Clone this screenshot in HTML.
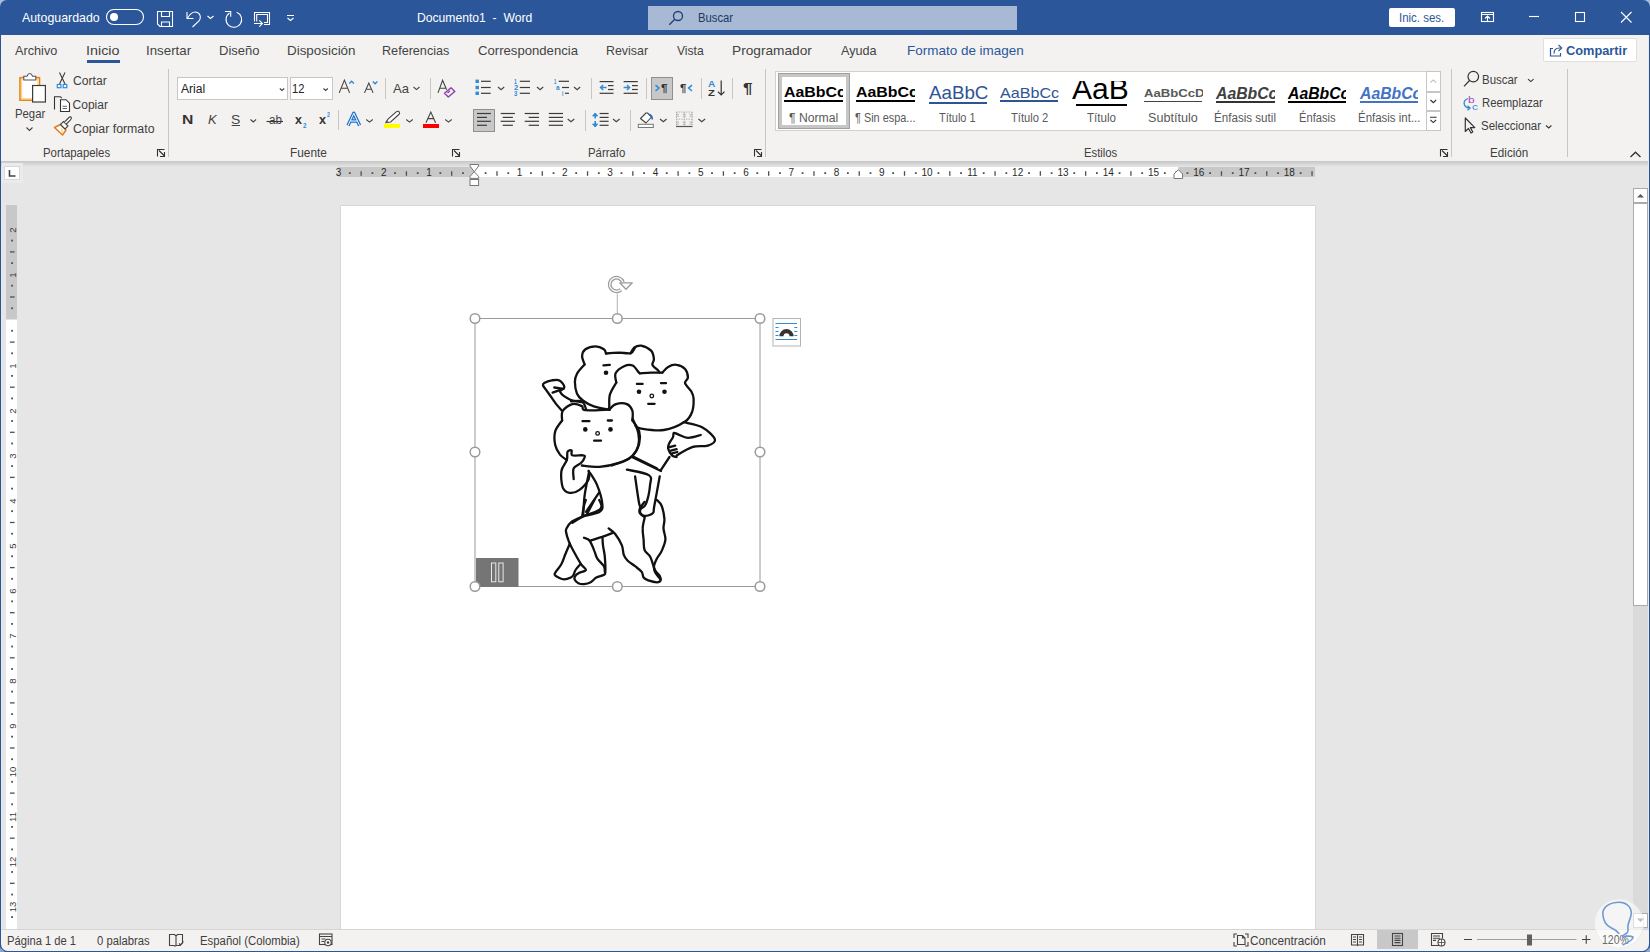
<!DOCTYPE html>
<html><head><meta charset="utf-8"><style>
html,body{margin:0;padding:0;width:1650px;height:952px;overflow:hidden;background:#e6e6e6;position:relative}
.t{position:absolute;line-height:1;white-space:nowrap;transform-origin:0 0;font-family:"Liberation Sans",sans-serif}
svg{position:absolute;overflow:visible}
</style></head><body>
<div style='position:absolute;left:0px;top:0px;width:1650px;height:35px;background:#2b579a'></div>
<div style='position:absolute;left:0px;top:35px;width:1650px;height:126px;background:#f3f2f1'></div>
<div style='position:absolute;left:0px;top:161px;width:1650px;height:6px;background:linear-gradient(#c6c6c6,#e6e6e6)'></div>
<div style='position:absolute;left:0px;top:929px;width:1650px;height:23px;background:#f3f2f1;border-top:1px solid #d4d4d4;box-sizing:border-box'></div>
<div style='position:absolute;left:1648px;top:35px;width:1px;height:894px;background:#e8e8e8'></div>
<div style='position:absolute;left:648px;top:6px;width:369px;height:24px;background:#a7b9d4'></div>
<div style='position:absolute;left:1389px;top:8px;width:66px;height:19px;background:#fff;border-radius:2px'></div>
<div style='position:absolute;left:87px;top:60px;width:33px;height:3px;background:#2b579a'></div>
<div style='position:absolute;left:1543px;top:38px;width:94px;height:24px;background:#fff;border:1px solid #e1dfdd;border-radius:2px;box-sizing:border-box'></div>
<div style='position:absolute;left:168px;top:69px;width:1px;height:88px;background:#c8c6c4'></div>
<div style='position:absolute;left:765px;top:69px;width:1px;height:88px;background:#c8c6c4'></div>
<div style='position:absolute;left:1451px;top:69px;width:1px;height:88px;background:#c8c6c4'></div>
<div style='position:absolute;left:1567px;top:69px;width:1px;height:88px;background:#c8c6c4'></div>
<div style='position:absolute;left:341px;top:206px;width:974px;height:723px;background:#fff'></div>
<svg style="left:0;top:0" width="1650" height="35" viewBox="0 0 1650 35">
<g fill="none" stroke="#fff" stroke-width="1.1">
<rect x="106.5" y="9.5" width="37" height="15" rx="7.5"/>
<path d="M157.5 11.5h15v15h-12.5l-2.5-2.5z"/>
<path d="M161.5 11.5v5h8v-5"/>
<path d="M161.5 26.5v-4.5h8v4.5"/>
<path d="M187 12v6.5h6.5"/>
<path d="M187.5 18c3-5 7-7 10-5.5c3.5 2 3.5 5.5 1.5 8.5l-6.5 6"/>
<path d="M207.5 16l3 2.5l3-2.5"/>
<path d="M236.7 12.2A7.8 7.8 0 1 1 229.5 13"/>
<path d="M225 11.5h5.7v5.2"/>
<path d="M254.5 21.5v-9h15v12h-5.5M256.7 21.5v-7h10.8v8h-3.5"/>
<path d="M254 23.5h8.5m-3.2-3.2l3.2 3.2l-3.2 3.2"/>
<path d="M287 15.5h7M287.5 18l3 2.5l3-2.5"/>
<rect x="1481.5" y="12.5" width="12" height="9"/>
<path d="M1481.5 14.5h12M1487.5 21.5v-5.5m-2.5 2.5l2.5-2.5l2.5 2.5"/>
<path d="M1529 16.5h10"/>
<rect x="1575.5" y="12.5" width="9" height="9"/>
<path d="M1621 12l10.5 10.5M1631.5 12l-10.5 10.5"/>
</g>
<circle cx="114" cy="17" r="4" fill="#fff"/>
<g fill="none" stroke="#1f3f73" stroke-width="1.3"><circle cx="678" cy="16" r="4.5"/><path d="M674.8 19.2l-5.5 5.5"/></g>
</svg>
<svg style="left:0;top:60px" width="170" height="100" viewBox="0 60 170 100">
<rect x="20" y="77.7" width="19.5" height="22.5" fill="#fff" stroke="#e8830f" stroke-width="1.6"/>
<rect x="21.5" y="79.2" width="16.5" height="19.5" fill="none" stroke="#fbd38b" stroke-width="1.2"/>
<path d="M23.8 80v-3.7h3.2c0.8-2 1.7-2.8 2.8-2.8s2 0.8 2.8 2.8h3.2v3.7z" fill="#fff" stroke="#555" stroke-width="1.1"/>
<rect x="32.6" y="85.5" width="12.8" height="16.5" fill="#fff" stroke="#3b3b3b" stroke-width="1.2"/>
<path d="M26.5 127.5l3 3l3-3" fill="none" stroke="#444" stroke-width="1.1"/>
<path d="M59.5 72.5l5.5 11.5M65 72.5l-5.5 11.5" stroke="#3b3b3b" stroke-width="1.1" fill="none"/>
<rect x="57.3" y="84.5" width="3.6" height="3.2" fill="#fff" stroke="#2f8ad8" stroke-width="1.2"/>
<rect x="63.2" y="84.5" width="3.6" height="3.2" fill="#fff" stroke="#2f8ad8" stroke-width="1.2"/>
<path d="M54.5 109.5v-12.8h5.8l1.5 1.5" fill="none" stroke="#333" stroke-width="1.1"/>
<path d="M60.5 111.5v-11.8h5.5l3.5 3.5v8.3z" fill="#fff" stroke="#333" stroke-width="1.1"/>
<path d="M62.5 106.3h4.5M62.5 108.5h4.5" stroke="#555" stroke-width="0.9"/>
<path d="M54.5 127.5l6-3l5.5 5.5l-3.5 5z" fill="#fff" stroke="#e07b17" stroke-width="1.5" stroke-linejoin="round"/>
<path d="M61 127l2.5 4l-2 2.5z" fill="#fbd38b"/>
<path d="M60.5 124.5l3-3l4.5 4.5l-3 3z" fill="#fff" stroke="#444" stroke-width="1.1"/>
<path d="M64.5 122l4.5-4.5c0.8-0.8 2-0.8 2.3 0s0 1.5-0.8 2.3l-4.2 4.2" fill="#fff" stroke="#444" stroke-width="1.1"/>
<path d="M157.5 156.5v-7h7M159 150.5l5.5 5.5M164.5 152v4.5h-4.5" fill="none" stroke="#333" stroke-width="1.1"/>
</svg>
<div style='position:absolute;left:177px;top:77px;width:111px;height:23px;background:#fff;border:1px solid #c8c6c4;box-sizing:border-box'></div>
<div style='position:absolute;left:290px;top:77px;width:43px;height:23px;background:#fff;border:1px solid #c8c6c4;box-sizing:border-box'></div>
<svg style="left:260px;top:115px;z-index:6" width="30" height="12" viewBox="260 115 30 12"><path d="M266.5 121.5h16.5" stroke="#3a3a3a" stroke-width="1.1"/></svg>
<svg style="left:170px;top:70px" width="300" height="70" viewBox="170 70 300 70">
<g fill="none" stroke="#444" stroke-width="1.1">
<path d="M279.8 88.5l2.2 2l2.2-2M323.5 88.5l2.2 2l2.2-2"/>
<path d="M339.2 92.9l5.2-12.8l5.2 12.8M341.2 88.3h6.4"/>
<path d="M364.5 92.9l4.3-9.8l4.3 9.8M366.2 89.3h5.2"/>
<path d="M413.5 87l3 2.6l3-2.6"/>
<path d="M438 92.9l4.6-12.6l4 9.5M439.8 88.3h5.5"/>
<path d="M250.5 119.5l2.8 2.5l2.8-2.5M366.3 119.5l3.2 2.6l3.2-2.6M406.3 119.5l3.2 2.6l3.2-2.6M445.3 119.5l3.2 2.6l3.2-2.6"/>
<path d="M426 122.7l4.8-10.7l4.8 10.7M427.8 118.6h6"/>
</g>
<path d="M349.3 83.6l2.3-2.3l2.3 2.3M372.8 81.5l2.3 2.3l2.3-2.3" fill="none" stroke="#2f8ad8" stroke-width="1.4"/>
<path d="M444.5 93.2l6.5-5.5l3.8 3.8l-6.5 5.5z" fill="none" stroke="#8e44ad" stroke-width="1.5" stroke-linejoin="round"/>
<path d="M447.5 93l2.5-2.3" stroke="#8e44ad" stroke-width="1.3"/>
<path d="M231.7 125.5h8.3" stroke="#444" stroke-width="1"/>
<path d="M348 125.5l5.8-12.3l5.8 12.3M350.3 121h7" fill="none" stroke="#1e73c9" stroke-width="3.4" stroke-linejoin="round"/><path d="M348 125.5l5.8-12.3l5.8 12.3M350.3 121h7" fill="none" stroke="#fff" stroke-width="1" stroke-linejoin="round"/>
<path d="M386 122.5l2-3.5l8.5-7.3c1-0.8 2.3-0.6 2.8 0.3c0.5 0.8 0.3 1.8-0.5 2.5l-8.2 7.5z" fill="#fff" stroke="#444" stroke-width="1.1"/>
<path d="M385 122.7l3-0.5l-1-2.2z" fill="#555"/>
<rect x="384" y="124" width="16" height="4" fill="#ffff00"/>
<rect x="423" y="124" width="16" height="4" fill="#ff0000"/>
<path d="M452.5 156.5v-7h7M454 150.5l5.5 5.5M459.5 152v4.5h-4.5" fill="none" stroke="#333" stroke-width="1.1"/>
</svg>
<div style='position:absolute;left:385px;top:78px;width:1px;height:21px;background:#c8c6c4'></div>
<div style='position:absolute;left:430px;top:78px;width:1px;height:21px;background:#c8c6c4'></div>
<div style='position:absolute;left:338px;top:110px;width:1px;height:20px;background:#c8c6c4'></div>
<div style='position:absolute;left:651px;top:77px;width:22px;height:23px;background:#c8c8c8;border:1px solid #8f8f8f;box-sizing:border-box'></div>
<div style='position:absolute;left:473px;top:109px;width:22px;height:23px;background:#c8c8c8;border:1px solid #8f8f8f;box-sizing:border-box'></div>
<div style='position:absolute;left:591px;top:78px;width:1px;height:21px;background:#c8c6c4'></div>
<div style='position:absolute;left:646px;top:78px;width:1px;height:21px;background:#c8c6c4'></div>
<div style='position:absolute;left:701px;top:78px;width:1px;height:21px;background:#c8c6c4'></div>
<div style='position:absolute;left:732px;top:78px;width:1px;height:21px;background:#c8c6c4'></div>
<div style='position:absolute;left:585px;top:110px;width:1px;height:21px;background:#c8c6c4'></div>
<div style='position:absolute;left:630px;top:110px;width:1px;height:21px;background:#c8c6c4'></div>
<svg style="left:460px;top:70px" width="320" height="90" viewBox="460 70 320 90"><rect x="475.5" y="79.6" width="3.4" height="3.4" fill="#2f8ad8"/><path d="M481 81.3H490.7" stroke="#3b3b3b" stroke-width="1.2"/><path d="M519.8 81.3H530" stroke="#3b3b3b" stroke-width="1.2"/><rect x="475.5" y="85.8" width="3.4" height="3.4" fill="#2f8ad8"/><path d="M481 87.5H490.7" stroke="#3b3b3b" stroke-width="1.2"/><path d="M519.8 87.5H530" stroke="#3b3b3b" stroke-width="1.2"/><rect x="475.5" y="91.6" width="3.4" height="3.4" fill="#2f8ad8"/><path d="M481 93.3H490.7" stroke="#3b3b3b" stroke-width="1.2"/><path d="M519.8 93.3H530" stroke="#3b3b3b" stroke-width="1.2"/><path d="M558.7 81.3H569" stroke="#3b3b3b" stroke-width="1.2"/><path d="M562 87.5H569" stroke="#3b3b3b" stroke-width="1.2"/><path d="M565 93.3H569" stroke="#3b3b3b" stroke-width="1.2"/><path d="M599.6 81.6H613.5" stroke="#3b3b3b" stroke-width="1.2"/><path d="M623.6 81.6H637.8" stroke="#3b3b3b" stroke-width="1.2"/><path d="M599.6 93.3H613.5" stroke="#3b3b3b" stroke-width="1.2"/><path d="M623.6 93.3H637.8" stroke="#3b3b3b" stroke-width="1.2"/><path d="M608 85.6H613.5" stroke="#3b3b3b" stroke-width="1.2"/><path d="M632 85.6H637.8" stroke="#3b3b3b" stroke-width="1.2"/><path d="M608 89.5H613.5" stroke="#3b3b3b" stroke-width="1.2"/><path d="M632 89.5H637.8" stroke="#3b3b3b" stroke-width="1.2"/><path d="M606.5 87.5h-6m2.6-2.6l-2.6 2.6l2.6 2.6M623.6 87.5h6m-2.6-2.6l2.6 2.6l-2.6 2.6" fill="none" stroke="#2f8ad8" stroke-width="1.4"/><path d="M655.5 85.2l3.5 2.9l-3.5 2.9M692 85.2l-3.5 2.9l3.5 2.9" fill="none" stroke="#2f8ad8" stroke-width="1.5"/><path d="M498 87l3.1 2.6l3.1-2.6" fill="none" stroke="#444" stroke-width="1.2"/><path d="M537 87l3.1 2.6l3.1-2.6" fill="none" stroke="#444" stroke-width="1.2"/><path d="M574 87l3.1 2.6l3.1-2.6" fill="none" stroke="#444" stroke-width="1.2"/><path d="M567.7 119l3.3 2.7l3.3-2.7" fill="none" stroke="#444" stroke-width="1.2"/><path d="M613 119l3.3 2.7l3.3-2.7" fill="none" stroke="#444" stroke-width="1.2"/><path d="M660 119l3.3 2.7l3.3-2.7" fill="none" stroke="#444" stroke-width="1.2"/><path d="M698.5 119l3.3 2.7l3.3-2.7" fill="none" stroke="#444" stroke-width="1.2"/><path d="M477 113.5H490.9" stroke="#3b3b3b" stroke-width="1.2"/><path d="M500.7 113.5H514.9" stroke="#3b3b3b" stroke-width="1.2"/><path d="M524.7 113.5H539" stroke="#3b3b3b" stroke-width="1.2"/><path d="M548.8 113.5H563" stroke="#3b3b3b" stroke-width="1.2"/><path d="M599.6 113.5H608.6" stroke="#3b3b3b" stroke-width="1.2"/><path d="M477 117.4H487" stroke="#3b3b3b" stroke-width="1.2"/><path d="M502.7 117.4H512.9" stroke="#3b3b3b" stroke-width="1.2"/><path d="M528.7 117.4H539" stroke="#3b3b3b" stroke-width="1.2"/><path d="M548.8 117.4H563" stroke="#3b3b3b" stroke-width="1.2"/><path d="M599.6 117.4H608.6" stroke="#3b3b3b" stroke-width="1.2"/><path d="M477 121.3H490.9" stroke="#3b3b3b" stroke-width="1.2"/><path d="M500.7 121.3H514.9" stroke="#3b3b3b" stroke-width="1.2"/><path d="M524.7 121.3H539" stroke="#3b3b3b" stroke-width="1.2"/><path d="M548.8 121.3H563" stroke="#3b3b3b" stroke-width="1.2"/><path d="M599.6 121.3H608.6" stroke="#3b3b3b" stroke-width="1.2"/><path d="M477 125.3H487" stroke="#3b3b3b" stroke-width="1.2"/><path d="M502.7 125.3H512.9" stroke="#3b3b3b" stroke-width="1.2"/><path d="M528.7 125.3H539" stroke="#3b3b3b" stroke-width="1.2"/><path d="M548.8 125.3H563" stroke="#3b3b3b" stroke-width="1.2"/><path d="M599.6 125.3H608.6" stroke="#3b3b3b" stroke-width="1.2"/><path d="M595.2 113v5.6M595.2 121v5.9" stroke="#2f8ad8" stroke-width="1.6"/><path d="M592.5 116l2.7-3l2.7 3zM592.5 124l2.7 3l2.7-3z" fill="#2f8ad8" stroke="#2f8ad8" stroke-width="0.8"/><path d="M721.2 80.5v14.5m-3.3-3.3l3.3 3.3l3.3-3.3" fill="none" stroke="#333" stroke-width="1.2"/><path d="M640.5 118.5l5.5-5.5l1.5 0l4 4l-5.5 6z" fill="#fff" stroke="#444" stroke-width="1.1" stroke-linejoin="round"/><path d="M649.5 114.5c2 1 3 2.5 2.8 5" fill="none" stroke="#1e6fc4" stroke-width="1.5"/><rect x="638.3" y="124.3" width="15" height="3.2" fill="#fff" stroke="#777" stroke-width="1"/><g stroke="#999" stroke-width="0.8" stroke-dasharray="1.2 1.2" fill="none"><path d="M676.5 112h16M676.5 119.2h16M676.5 112v14M684.3 112v14M692.2 112v14"/><path d="M676 114.2h3M682.8 114.2h3M689.5 114.2h3M676 116.2h3M682.8 116.2h3M689.5 116.2h3M676 122.1h3M682.8 122.1h3M689.5 122.1h3M676 124.1h3M682.8 124.1h3M689.5 124.1h3" stroke-dasharray="none" stroke-width="0.7"/></g><path d="M676 126.5h16.5" stroke="#555" stroke-width="1.2"/><path d="M754.5 156.5v-7h7M756 150.5l5.5 5.5M761.5 152v4.5h-4.5" fill="none" stroke="#333" stroke-width="1.1"/></svg>
<div style='position:absolute;left:775px;top:71px;width:666px;height:60px;background:#fff;border:1px solid #d2d0ce;box-sizing:border-box'></div>
<div style='position:absolute;left:777.5px;top:73px;width:72px;height:56px;border:1px solid #a0a0a0;box-sizing:border-box'></div>
<div style='position:absolute;left:778.5px;top:74px;width:70px;height:54px;border:3px solid #c6c6c6;box-sizing:border-box'></div>
<div style='position:absolute;left:1426px;top:71px;width:15px;height:21px;background:#fff;border:1px solid #c8c6c4;box-sizing:border-box'></div>
<div style='position:absolute;left:1426px;top:92px;width:15px;height:19px;background:#fff;border:1px solid #c8c6c4;box-sizing:border-box'></div>
<div style='position:absolute;left:1426px;top:111px;width:15px;height:20px;background:#fff;border:1px solid #c8c6c4;box-sizing:border-box'></div>
<svg style="left:1420px;top:70px" width="30" height="70" viewBox="1420 70 30 70">
<path d="M1430.5 82.5l2.8-2.6l2.8 2.6" fill="none" stroke="#c0c0c0" stroke-width="1.1"/>
<path d="M1430.5 100l2.8 2.6l2.8-2.6" fill="none" stroke="#333" stroke-width="1.2"/>
<path d="M1430 117.2h6.6M1430.5 120l2.8 2.6l2.8-2.6" fill="none" stroke="#333" stroke-width="1.1"/>
</svg>
<div style='position:absolute;left:784px;top:100px;width:58.7px;height:2px;background:#000'></div>
<div style='position:absolute;left:856px;top:100px;width:58.5px;height:2px;background:#000'></div>
<div style='position:absolute;left:928.5px;top:102px;width:58px;height:2px;background:#2f5496'></div>
<div style='position:absolute;left:1000px;top:100.3px;width:58px;height:1.7px;background:#2f5496'></div>
<div style='position:absolute;left:1076px;top:104px;width:50.7px;height:2px;background:#000'></div>
<div style='position:absolute;left:1144px;top:100.5px;width:58.3px;height:1.4px;background:#444'></div>
<div style='position:absolute;left:1216px;top:101.4px;width:58.5px;height:1.5px;background:#333'></div>
<div style='position:absolute;left:1288px;top:101px;width:58px;height:2px;background:#000'></div>
<div style='position:absolute;left:1360px;top:101px;width:58px;height:1.7px;background:#4472c4'></div>
<svg style="left:1440px;top:140px" width="30" height="20" viewBox="1440 140 30 20"><path d="M1440.5 156.5v-7h7M1442 150.5l5.5 5.5M1447.5 152v4.5h-4.5" fill="none" stroke="#333" stroke-width="1.1"/></svg>
<svg style="left:1455px;top:65px" width="195" height="100" viewBox="1455 65 195 100">
<g fill="none" stroke="#333" stroke-width="1.2">
<circle cx="1473.3" cy="76.6" r="5.3"/><path d="M1469.5 80.5l-5.5 5.8"/>
<path d="M1465.3 118v13.5l3.2-3l2.5 4.5l1.8-1l-2.4-4.4h4.4z" stroke-linejoin="round"/>
<path d="M1528 79.2l2.8 2.4l2.8-2.4M1546 125.5l2.7 2.4l2.7-2.4" stroke-width="1.1"/>
<path d="M1630.5 157l5-4.8l5 4.8" stroke-width="1.3"/>
</g>
<path d="M1468 98.5c-3 1-4.5 3.5-3.5 6.5c0.8 2 2.5 3 5 3" fill="none" stroke="#2f8ad8" stroke-width="1.3"/>
<path d="M1467.5 105.8l2.6 2.2l-2.6 2.2" fill="none" stroke="#2f8ad8" stroke-width="1.3"/>
</svg>
<svg style="left:1540px;top:40px" width="30" height="25" viewBox="1540 40 30 25">
<path d="M1553 48.5h-2.5v7.5h10v-3" fill="none" stroke="#2b579a" stroke-width="1.2"/>
<path d="M1554 53.5c0-3.5 2-5.5 5.5-5.5h1.5" fill="none" stroke="#2b579a" stroke-width="1.2"/>
<path d="M1558.5 44.8l3.2 3.2l-3.2 3.2" fill="none" stroke="#2b579a" stroke-width="1.2"/>
</svg>
<svg style="left:330px;top:160px" width="1000" height="30" viewBox="330 160 1000 30"><rect x="338" y="167" width="977" height="10" fill="#c8c8c8"/><rect x="474.3" y="167" width="704.0" height="10" fill="#fff"/><rect x="348.88" y="172.2" width="1.8" height="1.8" fill="#505050"/><rect x="360.50" y="171.2" width="1.3" height="4.6" fill="#505050"/><rect x="371.52" y="172.2" width="1.8" height="1.8" fill="#505050"/><rect x="394.16" y="172.2" width="1.8" height="1.8" fill="#505050"/><rect x="405.78" y="171.2" width="1.3" height="4.6" fill="#505050"/><rect x="416.80" y="172.2" width="1.8" height="1.8" fill="#505050"/><rect x="439.44" y="172.2" width="1.8" height="1.8" fill="#505050"/><rect x="451.06" y="171.2" width="1.3" height="4.6" fill="#505050"/><rect x="462.08" y="172.2" width="1.8" height="1.8" fill="#505050"/><rect x="484.72" y="172.2" width="1.8" height="1.8" fill="#505050"/><rect x="496.34" y="171.2" width="1.3" height="4.6" fill="#505050"/><rect x="507.36" y="172.2" width="1.8" height="1.8" fill="#505050"/><rect x="530.00" y="172.2" width="1.8" height="1.8" fill="#505050"/><rect x="541.62" y="171.2" width="1.3" height="4.6" fill="#505050"/><rect x="552.64" y="172.2" width="1.8" height="1.8" fill="#505050"/><rect x="575.28" y="172.2" width="1.8" height="1.8" fill="#505050"/><rect x="586.90" y="171.2" width="1.3" height="4.6" fill="#505050"/><rect x="597.92" y="172.2" width="1.8" height="1.8" fill="#505050"/><rect x="620.56" y="172.2" width="1.8" height="1.8" fill="#505050"/><rect x="632.18" y="171.2" width="1.3" height="4.6" fill="#505050"/><rect x="643.20" y="172.2" width="1.8" height="1.8" fill="#505050"/><rect x="665.84" y="172.2" width="1.8" height="1.8" fill="#505050"/><rect x="677.46" y="171.2" width="1.3" height="4.6" fill="#505050"/><rect x="688.48" y="172.2" width="1.8" height="1.8" fill="#505050"/><rect x="711.12" y="172.2" width="1.8" height="1.8" fill="#505050"/><rect x="722.74" y="171.2" width="1.3" height="4.6" fill="#505050"/><rect x="733.76" y="172.2" width="1.8" height="1.8" fill="#505050"/><rect x="756.40" y="172.2" width="1.8" height="1.8" fill="#505050"/><rect x="768.02" y="171.2" width="1.3" height="4.6" fill="#505050"/><rect x="779.04" y="172.2" width="1.8" height="1.8" fill="#505050"/><rect x="801.68" y="172.2" width="1.8" height="1.8" fill="#505050"/><rect x="813.30" y="171.2" width="1.3" height="4.6" fill="#505050"/><rect x="824.32" y="172.2" width="1.8" height="1.8" fill="#505050"/><rect x="846.96" y="172.2" width="1.8" height="1.8" fill="#505050"/><rect x="858.58" y="171.2" width="1.3" height="4.6" fill="#505050"/><rect x="869.60" y="172.2" width="1.8" height="1.8" fill="#505050"/><rect x="892.24" y="172.2" width="1.8" height="1.8" fill="#505050"/><rect x="903.86" y="171.2" width="1.3" height="4.6" fill="#505050"/><rect x="914.88" y="172.2" width="1.8" height="1.8" fill="#505050"/><rect x="937.52" y="172.2" width="1.8" height="1.8" fill="#505050"/><rect x="949.14" y="171.2" width="1.3" height="4.6" fill="#505050"/><rect x="960.16" y="172.2" width="1.8" height="1.8" fill="#505050"/><rect x="982.80" y="172.2" width="1.8" height="1.8" fill="#505050"/><rect x="994.42" y="171.2" width="1.3" height="4.6" fill="#505050"/><rect x="1005.44" y="172.2" width="1.8" height="1.8" fill="#505050"/><rect x="1028.08" y="172.2" width="1.8" height="1.8" fill="#505050"/><rect x="1039.70" y="171.2" width="1.3" height="4.6" fill="#505050"/><rect x="1050.72" y="172.2" width="1.8" height="1.8" fill="#505050"/><rect x="1073.36" y="172.2" width="1.8" height="1.8" fill="#505050"/><rect x="1084.98" y="171.2" width="1.3" height="4.6" fill="#505050"/><rect x="1096.00" y="172.2" width="1.8" height="1.8" fill="#505050"/><rect x="1118.64" y="172.2" width="1.8" height="1.8" fill="#505050"/><rect x="1130.26" y="171.2" width="1.3" height="4.6" fill="#505050"/><rect x="1141.28" y="172.2" width="1.8" height="1.8" fill="#505050"/><rect x="1163.92" y="172.2" width="1.8" height="1.8" fill="#505050"/><rect x="1175.54" y="171.2" width="1.3" height="4.6" fill="#505050"/><rect x="1186.56" y="172.2" width="1.8" height="1.8" fill="#505050"/><rect x="1209.20" y="172.2" width="1.8" height="1.8" fill="#505050"/><rect x="1220.82" y="171.2" width="1.3" height="4.6" fill="#505050"/><rect x="1231.84" y="172.2" width="1.8" height="1.8" fill="#505050"/><rect x="1254.48" y="172.2" width="1.8" height="1.8" fill="#505050"/><rect x="1266.10" y="171.2" width="1.3" height="4.6" fill="#505050"/><rect x="1277.12" y="172.2" width="1.8" height="1.8" fill="#505050"/><rect x="1299.76" y="172.2" width="1.8" height="1.8" fill="#505050"/><rect x="1311.38" y="171.2" width="1.3" height="4.6" fill="#505050"/><path d="M470.0 164.5h8.6v1.5l-4.3 5.8l4.3 4.6v2h-8.6v-2l4.3-4.6l-4.3-5.8z" fill="#fff" stroke="#777" stroke-width="1"/><rect x="470.0" y="179.5" width="8.6" height="6" fill="#fff" stroke="#777" stroke-width="1"/><path d="M1174 178.5v-4.5l4.3-4.3l4.3 4.3v4.5z" fill="#fff" stroke="#777" stroke-width="1"/></svg>
<div style='position:absolute;left:326.46px;top:167.6px;width:24px;text-align:center;font:10px/1 "Liberation Sans",sans-serif;color:#2a2a2a'>3</div>
<div style='position:absolute;left:371.74px;top:167.6px;width:24px;text-align:center;font:10px/1 "Liberation Sans",sans-serif;color:#2a2a2a'>2</div>
<div style='position:absolute;left:417.02px;top:167.6px;width:24px;text-align:center;font:10px/1 "Liberation Sans",sans-serif;color:#2a2a2a'>1</div>
<div style='position:absolute;left:507.58px;top:167.6px;width:24px;text-align:center;font:10px/1 "Liberation Sans",sans-serif;color:#2a2a2a'>1</div>
<div style='position:absolute;left:552.86px;top:167.6px;width:24px;text-align:center;font:10px/1 "Liberation Sans",sans-serif;color:#2a2a2a'>2</div>
<div style='position:absolute;left:598.14px;top:167.6px;width:24px;text-align:center;font:10px/1 "Liberation Sans",sans-serif;color:#2a2a2a'>3</div>
<div style='position:absolute;left:643.42px;top:167.6px;width:24px;text-align:center;font:10px/1 "Liberation Sans",sans-serif;color:#2a2a2a'>4</div>
<div style='position:absolute;left:688.70px;top:167.6px;width:24px;text-align:center;font:10px/1 "Liberation Sans",sans-serif;color:#2a2a2a'>5</div>
<div style='position:absolute;left:733.98px;top:167.6px;width:24px;text-align:center;font:10px/1 "Liberation Sans",sans-serif;color:#2a2a2a'>6</div>
<div style='position:absolute;left:779.26px;top:167.6px;width:24px;text-align:center;font:10px/1 "Liberation Sans",sans-serif;color:#2a2a2a'>7</div>
<div style='position:absolute;left:824.54px;top:167.6px;width:24px;text-align:center;font:10px/1 "Liberation Sans",sans-serif;color:#2a2a2a'>8</div>
<div style='position:absolute;left:869.82px;top:167.6px;width:24px;text-align:center;font:10px/1 "Liberation Sans",sans-serif;color:#2a2a2a'>9</div>
<div style='position:absolute;left:915.10px;top:167.6px;width:24px;text-align:center;font:10px/1 "Liberation Sans",sans-serif;color:#2a2a2a'>10</div>
<div style='position:absolute;left:960.38px;top:167.6px;width:24px;text-align:center;font:10px/1 "Liberation Sans",sans-serif;color:#2a2a2a'>11</div>
<div style='position:absolute;left:1005.66px;top:167.6px;width:24px;text-align:center;font:10px/1 "Liberation Sans",sans-serif;color:#2a2a2a'>12</div>
<div style='position:absolute;left:1050.94px;top:167.6px;width:24px;text-align:center;font:10px/1 "Liberation Sans",sans-serif;color:#2a2a2a'>13</div>
<div style='position:absolute;left:1096.22px;top:167.6px;width:24px;text-align:center;font:10px/1 "Liberation Sans",sans-serif;color:#2a2a2a'>14</div>
<div style='position:absolute;left:1141.50px;top:167.6px;width:24px;text-align:center;font:10px/1 "Liberation Sans",sans-serif;color:#2a2a2a'>15</div>
<div style='position:absolute;left:1186.78px;top:167.6px;width:24px;text-align:center;font:10px/1 "Liberation Sans",sans-serif;color:#2a2a2a'>16</div>
<div style='position:absolute;left:1232.06px;top:167.6px;width:24px;text-align:center;font:10px/1 "Liberation Sans",sans-serif;color:#2a2a2a'>17</div>
<div style='position:absolute;left:1277.34px;top:167.6px;width:24px;text-align:center;font:10px/1 "Liberation Sans",sans-serif;color:#2a2a2a'>18</div>
<div style='position:absolute;left:2px;top:163px;width:21px;height:20px;background:#ebebeb'></div>
<div style='position:absolute;left:4px;top:166px;width:16px;height:14px;background:#fff;border:1px solid #d8d8d8;box-sizing:border-box'></div>
<svg style="left:0;top:160px" width="30" height="30" viewBox="0 160 30 30"><path d="M9.5 170v6h6" fill="none" stroke="#444" stroke-width="1.6"/></svg>
<svg style="left:0;top:200px" width="30" height="730" viewBox="0 200 30 730"><rect x="6" y="205" width="11" height="724" fill="#fff"/><rect x="6" y="205" width="11" height="114.5" fill="#c8c8c8"/><rect x="11.2" y="239.67" width="1.8" height="1.8" fill="#505050"/><rect x="10" y="251.25" width="4.6" height="1.3" fill="#505050"/><rect x="11.2" y="262.23" width="1.8" height="1.8" fill="#505050"/><rect x="11.2" y="284.78" width="1.8" height="1.8" fill="#505050"/><rect x="10" y="296.35" width="4.6" height="1.3" fill="#505050"/><rect x="11.2" y="307.33" width="1.8" height="1.8" fill="#505050"/><rect x="11.2" y="329.88" width="1.8" height="1.8" fill="#505050"/><rect x="10" y="341.45" width="4.6" height="1.3" fill="#505050"/><rect x="11.2" y="352.43" width="1.8" height="1.8" fill="#505050"/><rect x="11.2" y="374.98" width="1.8" height="1.8" fill="#505050"/><rect x="10" y="386.55" width="4.6" height="1.3" fill="#505050"/><rect x="11.2" y="397.53" width="1.8" height="1.8" fill="#505050"/><rect x="11.2" y="420.08" width="1.8" height="1.8" fill="#505050"/><rect x="10" y="431.65" width="4.6" height="1.3" fill="#505050"/><rect x="11.2" y="442.62" width="1.8" height="1.8" fill="#505050"/><rect x="11.2" y="465.18" width="1.8" height="1.8" fill="#505050"/><rect x="10" y="476.75" width="4.6" height="1.3" fill="#505050"/><rect x="11.2" y="487.73" width="1.8" height="1.8" fill="#505050"/><rect x="11.2" y="510.28" width="1.8" height="1.8" fill="#505050"/><rect x="10" y="521.85" width="4.6" height="1.3" fill="#505050"/><rect x="11.2" y="532.83" width="1.8" height="1.8" fill="#505050"/><rect x="11.2" y="555.38" width="1.8" height="1.8" fill="#505050"/><rect x="10" y="566.95" width="4.6" height="1.3" fill="#505050"/><rect x="11.2" y="577.93" width="1.8" height="1.8" fill="#505050"/><rect x="11.2" y="600.48" width="1.8" height="1.8" fill="#505050"/><rect x="10" y="612.05" width="4.6" height="1.3" fill="#505050"/><rect x="11.2" y="623.02" width="1.8" height="1.8" fill="#505050"/><rect x="11.2" y="645.58" width="1.8" height="1.8" fill="#505050"/><rect x="10" y="657.15" width="4.6" height="1.3" fill="#505050"/><rect x="11.2" y="668.13" width="1.8" height="1.8" fill="#505050"/><rect x="11.2" y="690.68" width="1.8" height="1.8" fill="#505050"/><rect x="10" y="702.25" width="4.6" height="1.3" fill="#505050"/><rect x="11.2" y="713.23" width="1.8" height="1.8" fill="#505050"/><rect x="11.2" y="735.77" width="1.8" height="1.8" fill="#505050"/><rect x="10" y="747.35" width="4.6" height="1.3" fill="#505050"/><rect x="11.2" y="758.33" width="1.8" height="1.8" fill="#505050"/><rect x="11.2" y="780.88" width="1.8" height="1.8" fill="#505050"/><rect x="10" y="792.45" width="4.6" height="1.3" fill="#505050"/><rect x="11.2" y="803.43" width="1.8" height="1.8" fill="#505050"/><rect x="11.2" y="825.98" width="1.8" height="1.8" fill="#505050"/><rect x="10" y="837.55" width="4.6" height="1.3" fill="#505050"/><rect x="11.2" y="848.53" width="1.8" height="1.8" fill="#505050"/><rect x="11.2" y="871.08" width="1.8" height="1.8" fill="#505050"/><rect x="10" y="882.65" width="4.6" height="1.3" fill="#505050"/><rect x="11.2" y="893.62" width="1.8" height="1.8" fill="#505050"/><rect x="11.2" y="916.18" width="1.8" height="1.8" fill="#505050"/></svg>
<div style='position:absolute;left:0px;top:224.30px;width:24px;height:12px;transform:rotate(-90deg);transform-origin:12px 6px;text-align:center;font:9.5px/12px "Liberation Sans",sans-serif;color:#3a3a3a;left:0.5px'>2</div>
<div style='position:absolute;left:0px;top:269.40px;width:24px;height:12px;transform:rotate(-90deg);transform-origin:12px 6px;text-align:center;font:9.5px/12px "Liberation Sans",sans-serif;color:#3a3a3a;left:0.5px'>1</div>
<div style='position:absolute;left:0px;top:359.60px;width:24px;height:12px;transform:rotate(-90deg);transform-origin:12px 6px;text-align:center;font:9.5px/12px "Liberation Sans",sans-serif;color:#3a3a3a;left:0.5px'>1</div>
<div style='position:absolute;left:0px;top:404.70px;width:24px;height:12px;transform:rotate(-90deg);transform-origin:12px 6px;text-align:center;font:9.5px/12px "Liberation Sans",sans-serif;color:#3a3a3a;left:0.5px'>2</div>
<div style='position:absolute;left:0px;top:449.80px;width:24px;height:12px;transform:rotate(-90deg);transform-origin:12px 6px;text-align:center;font:9.5px/12px "Liberation Sans",sans-serif;color:#3a3a3a;left:0.5px'>3</div>
<div style='position:absolute;left:0px;top:494.90px;width:24px;height:12px;transform:rotate(-90deg);transform-origin:12px 6px;text-align:center;font:9.5px/12px "Liberation Sans",sans-serif;color:#3a3a3a;left:0.5px'>4</div>
<div style='position:absolute;left:0px;top:540.00px;width:24px;height:12px;transform:rotate(-90deg);transform-origin:12px 6px;text-align:center;font:9.5px/12px "Liberation Sans",sans-serif;color:#3a3a3a;left:0.5px'>5</div>
<div style='position:absolute;left:0px;top:585.10px;width:24px;height:12px;transform:rotate(-90deg);transform-origin:12px 6px;text-align:center;font:9.5px/12px "Liberation Sans",sans-serif;color:#3a3a3a;left:0.5px'>6</div>
<div style='position:absolute;left:0px;top:630.20px;width:24px;height:12px;transform:rotate(-90deg);transform-origin:12px 6px;text-align:center;font:9.5px/12px "Liberation Sans",sans-serif;color:#3a3a3a;left:0.5px'>7</div>
<div style='position:absolute;left:0px;top:675.30px;width:24px;height:12px;transform:rotate(-90deg);transform-origin:12px 6px;text-align:center;font:9.5px/12px "Liberation Sans",sans-serif;color:#3a3a3a;left:0.5px'>8</div>
<div style='position:absolute;left:0px;top:720.40px;width:24px;height:12px;transform:rotate(-90deg);transform-origin:12px 6px;text-align:center;font:9.5px/12px "Liberation Sans",sans-serif;color:#3a3a3a;left:0.5px'>9</div>
<div style='position:absolute;left:0px;top:765.50px;width:24px;height:12px;transform:rotate(-90deg);transform-origin:12px 6px;text-align:center;font:9.5px/12px "Liberation Sans",sans-serif;color:#3a3a3a;left:0.5px'>10</div>
<div style='position:absolute;left:0px;top:810.60px;width:24px;height:12px;transform:rotate(-90deg);transform-origin:12px 6px;text-align:center;font:9.5px/12px "Liberation Sans",sans-serif;color:#3a3a3a;left:0.5px'>11</div>
<div style='position:absolute;left:0px;top:855.70px;width:24px;height:12px;transform:rotate(-90deg);transform-origin:12px 6px;text-align:center;font:9.5px/12px "Liberation Sans",sans-serif;color:#3a3a3a;left:0.5px'>12</div>
<div style='position:absolute;left:0px;top:900.80px;width:24px;height:12px;transform:rotate(-90deg);transform-origin:12px 6px;text-align:center;font:9.5px/12px "Liberation Sans",sans-serif;color:#3a3a3a;left:0.5px'>13</div>
<div style='position:absolute;left:1633px;top:188px;width:15px;height:741px;background:#dadada'></div>
<div style='position:absolute;left:1633px;top:188px;width:15px;height:15px;background:#fff;border:1px solid #ababab;box-sizing:border-box'></div>
<div style='position:absolute;left:1633px;top:203px;width:15px;height:403px;background:#fff;border:1px solid #ababab;box-sizing:border-box'></div>
<div style='position:absolute;left:1633px;top:913px;width:15px;height:15px;background:#fff;border:1px solid #ababab;box-sizing:border-box'></div>
<svg style="left:1630px;top:185px" width="20" height="750" viewBox="1630 185 20 750"><path d="M1637 197.5l3.5-3.5l3.5 3.5z" fill="#5a5a5a"/><path d="M1637 918.5l3.5 3.5l3.5-3.5z" fill="#5a5a5a"/></svg>
<div style='position:absolute;left:1377px;top:930px;width:41px;height:19px;background:#c8c8c8'></div>
<svg style="left:160px;top:925px" width="1480" height="27" viewBox="160 925 1480 27">
<g fill="none" stroke="#444" stroke-width="1.1">
<path d="M169.5 934.5h5l1.5 1.5l1.5-1.5h5v8.5l-2.5 2.5h-4l-0.5 0.5h-1l-0.5-0.5h-4.5z M176 936v9"/>
<path d="M179 943.5l1.5 1.5l3-3.5"/>
<rect x="319.5" y="934" width="12.5" height="10.5"/><path d="M319.5 936.5h12.5M321.5 939h4M321.5 941.5h3"/>
<path d="M1234 938v-4h3M1245 934h3v4M1248 942v4h-3M1237 946h-3v-4"/>
<path d="M1237.5 944.5v-9h5l2.5 2.5v6.5z M1242.5 935.5v2.5h2.5"/>
<path d="M1351.5 934.5h5.5l0.5 0.5l0.5-0.5h5.5v10.5h-5.5l-0.5 0.5l-0.5-0.5h-5.5z M1357.5 935v10.5M1353 937h3M1353 939.5h3M1353 942h3M1359 937h3M1359 939.5h3M1359 942h3"/>
<rect x="1392.5" y="933.5" width="10" height="12"/><path d="M1394.5 936h6M1394.5 938.2h6M1394.5 940.4h6M1394.5 942.6h6"/>
<path d="M1439.5 945.5h-8v-12h11v5M1433 936h7M1433 938.2h7M1433 940.4h3"/>
<path d="M1464 939.5h8M1582 939.5h8.5M1586.25 935.25v8.5"/>
</g>
<circle cx="1441.5" cy="942.5" r="3.5" fill="#fff" stroke="#444" stroke-width="1.1"/><path d="M1438 942.5h7M1441.5 939v7" stroke="#444" stroke-width="0.8"/>
<circle cx="328" cy="942.5" r="3.2" fill="#fff" stroke="#444" stroke-width="1.1"/><circle cx="328" cy="942.5" r="1.3" fill="#444"/>
<path d="M1477 939.5h99.5" stroke="#a0a0a0" stroke-width="1"/>
<rect x="1527" y="934.5" width="5" height="11" fill="#606060"/>
</g>
</svg>
<svg style="left:440px;top:260px" width="380" height="340" viewBox="440 260 380 340"><g fill="none" stroke="#111" stroke-width="2.3" stroke-linecap="round" stroke-linejoin="round"><path d="M584.6 364.4C584.2 363.0 581.9 358.5 582.1 356.0C582.2 353.5 583.2 350.9 585.4 349.3C587.7 347.7 592.4 346.3 595.5 346.3C598.6 346.3 602.2 348.1 603.9 349.3C605.7 350.5 605.7 352.8 606.0 353.5"/><path d="M606.0 353.5C608.2 353.3 614.9 352.7 619.0 352.6C623.2 352.6 628.1 353.9 630.8 353.1C633.5 352.2 634.3 348.5 635.0 347.6"/><path d="M584.6 364.4C583.3 366.0 578.6 370.7 577.0 373.7C575.4 376.6 574.9 378.7 574.9 382.1C574.9 385.4 575.7 390.7 577.0 393.8C578.3 396.9 580.1 398.4 582.9 400.5C585.7 402.6 589.3 404.9 593.8 406.4C598.3 408.0 607.1 409.2 609.8 409.8"/><path d="M561.9 410.6C560.9 409.5 558.0 406.4 556.0 403.9C554.0 401.4 551.8 397.9 550.1 395.5C548.4 393.1 547.1 391.3 545.9 389.6C544.7 387.9 543.3 386.5 543.0 385.4C542.7 384.3 542.8 383.7 544.2 382.9C545.7 382.1 549.3 380.8 551.8 380.4C554.3 380.0 557.3 379.3 559.4 380.4C561.5 381.5 564.3 385.1 564.4 387.1C564.6 389.1 559.2 390.0 560.2 392.1C561.2 394.2 566.7 398.0 570.3 399.7C573.9 401.4 580.1 401.8 582.1 402.2"/><path d="M554.3 387.5L563.6 388.8"/><path d="M552.6 392.6L561.1 389.6"/><path d="M603.5 365.3L609.8 364.8"/><path d="M571.1 401.4C573.0 401.4 579.5 400.0 582.1 401.4C584.6 402.8 585.6 408.4 586.3 409.8"/><path d="M630.5 353.4C631.1 352.5 632.3 349.1 634.0 347.8C635.8 346.5 638.3 345.2 641.1 345.6C644.0 346.1 648.9 348.4 651.1 350.6C653.2 352.8 653.7 356.7 653.9 359.1C654.1 361.5 651.8 362.9 652.5 364.8C653.2 366.7 657.0 369.2 658.2 370.5C659.3 371.8 659.3 372.2 659.6 372.6"/><path d="M616.3 382.5C616.2 381.0 614.3 376.0 615.6 373.3C616.9 370.6 621.3 367.5 624.1 366.2C627.0 364.9 630.3 364.6 632.6 365.5C635.0 366.4 637.1 370.6 638.3 371.9C639.5 373.2 639.5 373.1 639.7 373.3"/><path d="M639.7 373.3C641.6 373.2 647.3 372.7 651.1 372.6C654.8 372.5 660.5 372.6 662.4 372.6"/><path d="M662.4 372.6C663.4 371.6 665.7 368.2 668.1 366.9C670.4 365.6 673.8 364.4 676.6 364.8C679.4 365.1 683.2 366.9 685.1 369.0C687.0 371.2 687.9 375.2 687.9 377.6C687.9 379.9 684.5 380.9 685.1 383.2C685.7 385.6 690.1 389.1 691.5 391.7C692.9 394.3 693.5 395.5 693.6 398.8C693.7 402.1 693.6 407.8 692.2 411.6C690.8 415.4 689.8 418.5 685.1 421.5C680.4 424.6 671.2 428.9 663.8 430.0C656.5 431.2 645.9 429.3 641.1 428.6C636.4 427.9 636.4 426.3 635.5 425.8"/><path d="M616.3 382.5C615.2 384.5 611.1 390.4 609.9 394.6C608.7 398.7 609.5 405.0 609.2 407.3C609.0 409.7 608.6 408.5 608.5 408.8"/><path d="M648.2 403.8L654.6 403.8"/><path d="M636.9 383.9L642.6 383.9"/><path d="M661.0 383.2L666.0 383.2"/><path d="M632.6 418.7C633.6 421.1 637.4 428.4 638.3 432.9C639.2 437.4 639.2 441.9 638.3 445.6C637.4 449.4 635.0 453.0 632.6 455.6C630.3 458.2 627.7 459.6 624.1 461.2C620.6 462.9 613.5 464.8 611.3 465.5"/><path d="M683.7 422.2C686.8 423.1 696.9 424.4 702.1 427.2C707.3 430.0 713.9 436.2 714.9 439.3C715.8 442.3 711.6 444.3 707.8 445.6C704.0 446.9 697.4 445.4 692.2 447.1C687.0 448.7 679.2 454.1 676.6 455.6"/><path d="M700.7 435.0C698.6 435.5 691.7 438.0 687.9 437.8C684.2 437.7 680.4 435.1 678.0 434.3C675.7 433.5 674.6 432.4 673.8 432.9C672.9 433.3 673.8 435.5 673.0 437.1C672.3 438.8 670.3 440.9 669.5 442.8C668.7 444.7 667.6 446.3 668.1 448.5C668.6 450.6 670.9 454.1 672.3 455.6C673.8 457.0 675.9 456.7 676.6 457.0"/><path d="M669.5 447.1L675.2 445.6"/><path d="M670.9 450.6L676.6 449.2"/><path d="M672.3 453.4L677.3 452.0"/><path d="M669.5 457.0L661.0 469.8"/><path d="M634.0 457.0L656.7 468.3"/><path d="M562.1 420.5C562.2 418.9 561.0 413.7 562.7 410.9C564.5 408.2 569.1 404.9 572.3 404.1C575.5 403.3 579.7 405.1 581.9 406.1C584.0 407.2 580.7 409.7 585.3 410.2C589.8 410.8 605.2 409.7 609.2 409.6"/><path d="M609.2 409.6C610.3 408.6 613.0 405.0 616.0 404.1C618.9 403.2 624.2 403.0 626.9 404.1C629.6 405.2 631.5 408.2 632.4 410.9C633.3 413.7 632.4 418.9 632.4 420.5"/><path d="M562.1 420.5C560.9 422.3 556.4 427.3 555.2 431.4C554.1 435.5 554.4 441.2 555.2 445.1C556.0 448.9 558.1 452.1 560.0 454.6C562.0 457.1 565.7 459.2 566.8 460.1"/><path d="M581.9 465.5C584.8 465.8 593.5 467.3 599.6 466.9C605.8 466.4 613.3 464.6 618.7 462.8C624.2 461.0 629.0 459.2 632.4 456.0C635.8 452.8 638.1 447.8 639.2 443.7C640.3 439.6 640.3 435.3 639.2 431.4C638.1 427.5 633.5 422.3 632.4 420.5"/><path d="M594.1 440.7L601.0 440.7"/><path d="M582.5 421.2L589.4 421.2"/><path d="M607.8 420.5L611.9 420.5"/><path d="M573.7 479.2C573.7 477.4 572.4 471.0 573.7 468.3C574.9 465.5 579.4 464.6 581.2 462.8C583.0 461.0 584.2 458.6 584.6 457.3C584.9 456.1 585.3 455.6 583.2 455.3C581.2 454.9 574.2 456.1 572.3 455.3C570.4 454.5 572.4 451.1 571.6 450.5C570.8 449.9 568.3 450.3 567.5 451.9C566.7 453.5 567.9 456.9 566.8 460.1C565.8 463.3 562.1 466.4 561.4 471.0C560.7 475.5 561.4 483.7 562.7 487.4C564.1 491.0 566.8 492.4 569.6 492.8C572.3 493.3 575.9 492.4 579.1 490.1C582.3 487.8 587.1 482.4 588.7 479.2C590.3 476.0 588.7 472.4 588.7 471.0"/><path d="M588.7 471.0C590.1 473.3 594.6 479.2 596.9 484.6C599.2 490.1 601.9 499.2 602.3 503.8C602.8 508.3 602.6 509.9 599.6 511.9C596.6 514.0 589.1 514.2 584.6 516.0C580.0 517.9 574.4 521.7 572.3 522.9"/><path d="M588.7 473.7C588.0 477.4 585.5 488.7 584.6 495.6C583.7 502.4 583.5 511.5 583.2 514.7"/><path d="M598.9 492.8L586.0 511.9"/><path d="M626.9 469.6C630.6 470.5 644.9 472.6 648.8 475.1C652.6 477.6 650.6 479.9 650.1 484.6C649.7 489.4 647.6 499.7 646.0 503.8C644.4 507.8 641.5 507.6 640.6 509.2C639.7 510.8 639.9 512.2 640.6 513.3C641.2 514.4 642.6 516.0 644.7 516.0C646.7 516.0 651.3 514.9 652.8 513.3C654.4 511.7 653.1 512.6 654.2 506.5C655.4 500.3 658.8 481.5 659.7 476.5"/><path d="M632.4 457.3L661.0 471.0"/><path d="M635.1 476.5C635.8 481.0 638.1 498.5 639.2 503.8C640.3 509.0 641.5 507.2 641.9 507.8"/><path d="M600.1 509.5C599.2 509.9 597.3 511.2 594.4 512.3C591.6 513.4 586.9 514.5 583.1 516.1C579.3 517.7 574.5 519.7 571.7 521.7C569.0 523.8 567.5 526.6 566.5 528.4C565.6 530.1 565.7 529.9 566.1 532.2C566.5 534.4 567.5 538.1 568.9 541.6C570.3 545.1 572.5 549.2 574.6 553.0C576.6 556.7 579.3 561.5 581.2 564.3C583.1 567.1 586.2 568.6 585.9 570.0C585.6 571.4 581.0 571.9 579.3 572.8C577.6 573.8 576.3 574.5 575.5 575.7C574.7 576.8 574.1 578.2 574.6 579.4C575.1 580.7 576.8 582.4 578.4 583.2C579.9 584.0 582.0 584.3 584.0 584.2C586.1 584.0 588.6 583.4 590.7 582.3C592.7 581.2 594.1 578.8 596.3 577.5C598.5 576.3 602.4 575.7 603.9 574.7C605.4 573.8 605.2 574.9 605.3 571.9C605.5 568.9 605.2 561.2 604.8 556.7C604.5 552.3 603.3 548.5 603.0 545.4C602.6 542.2 602.6 539.1 602.5 537.8"/><path d="M569.9 543.5C569.1 545.4 566.5 551.4 565.1 554.8C563.7 558.3 562.9 561.5 561.3 564.3C559.8 567.1 556.8 570.1 555.7 571.9C554.6 573.6 554.3 573.8 554.7 574.7C555.2 575.7 556.9 576.8 558.5 577.5C560.1 578.3 562.1 579.4 564.2 579.4C566.2 579.4 569.2 578.3 570.8 577.5C572.4 576.8 572.9 576.0 573.6 574.7C574.4 573.4 574.4 571.7 575.5 570.0C576.6 568.2 579.5 565.2 580.3 564.3"/><path d="M584.0 537.8C585.0 538.3 588.0 538.5 589.7 540.7C591.4 542.9 593.2 548.1 594.4 551.1C595.7 554.1 595.7 556.1 597.3 558.6C598.9 561.2 602.6 564.0 603.9 566.2C605.2 568.4 604.7 570.9 604.8 571.9"/><path d="M589.7 540.7C591.8 540.0 598.2 538.1 602.0 536.9C605.8 535.6 610.7 533.7 612.4 533.1"/><path d="M608.6 528.4C609.7 529.3 613.0 531.2 615.2 534.0C617.5 536.9 620.4 541.9 621.9 545.4C623.3 548.9 622.8 552.3 623.8 554.8C624.7 557.4 625.7 558.6 627.5 560.5C629.4 562.4 632.7 564.3 635.1 566.2C637.5 568.1 640.3 570.0 641.7 571.9C643.1 573.8 642.5 576.1 643.6 577.5C644.7 579.0 646.1 579.6 648.3 580.4C650.6 581.2 654.8 582.3 656.9 582.3C658.9 582.3 660.2 581.5 660.6 580.4C661.1 579.3 660.6 577.4 659.7 575.7C658.7 573.9 656.5 573.1 655.0 570.0C653.4 566.8 652.0 560.0 650.2 556.7C648.5 553.4 645.7 553.0 644.6 550.1C643.5 547.3 643.9 543.3 643.6 539.7C643.3 536.1 642.5 532.0 642.7 528.4C642.8 524.7 644.2 519.7 644.6 518.0"/><path d="M656.9 500.0C657.6 500.9 660.3 502.5 661.6 505.7C662.8 508.8 664.1 515.1 664.4 518.9C664.7 522.7 663.3 524.9 663.5 528.4C663.6 531.8 665.7 535.9 665.4 539.7C665.1 543.5 663.0 547.9 661.6 551.1C660.2 554.2 658.1 556.1 656.9 558.6C655.6 561.2 654.3 564.0 654.0 566.2C653.7 568.4 653.9 569.7 655.0 571.9C656.1 574.1 659.7 578.2 660.6 579.4"/><path d="M644.6 517.0C643.8 516.4 640.6 514.7 639.8 513.2C639.0 511.8 639.4 510.0 639.8 508.5C640.3 507.0 641.9 505.4 642.7 504.3C643.5 503.2 644.2 502.3 644.6 501.9"/><path d="M582.2 516.1C582.5 514.3 583.4 508.4 584.0 505.7C584.7 503.0 585.6 500.9 585.9 500.0"/><path d="M586.9 514.2L594.4 500.0"/><path d="M599.2 500.0C599.6 500.9 601.4 504.1 601.5 505.7C601.7 507.2 600.4 508.8 600.1 509.5"/></g><circle cx="606.0" cy="372.8" r="2.3" fill="#111"/><circle cx="639.0" cy="391.7" r="2.3" fill="#111"/><circle cx="664.5" cy="391.7" r="2.3" fill="#111"/><circle cx="585.3" cy="429.4" r="2.3" fill="#111"/><circle cx="610.5" cy="429.4" r="2.3" fill="#111"/><circle cx="651.8" cy="396.0" r="1.8" fill="none" stroke="#111" stroke-width="1.3"/><circle cx="597.6" cy="433.4" r="1.8" fill="none" stroke="#111" stroke-width="1.3"/><rect x="475" y="318.5" width="285" height="268" fill="none" stroke="#9a9a9a" stroke-width="1"/><path d="M617.3 293.5V313" stroke="#b0b0b0" stroke-width="1"/><rect x="476" y="558" width="42.5" height="29" fill="#757575"/><rect x="491.5" y="563" width="4.3" height="18.8" fill="none" stroke="#e8e8e8" stroke-width="1"/><rect x="498.8" y="563" width="4.3" height="18.8" fill="none" stroke="#e8e8e8" stroke-width="1"/><circle cx="475" cy="318.5" r="4.8" fill="#fff" stroke="#9a9a9a" stroke-width="1.5"/><circle cx="617.3" cy="318.5" r="4.8" fill="#fff" stroke="#9a9a9a" stroke-width="1.5"/><circle cx="760" cy="318.5" r="4.8" fill="#fff" stroke="#9a9a9a" stroke-width="1.5"/><circle cx="475" cy="452" r="4.8" fill="#fff" stroke="#9a9a9a" stroke-width="1.5"/><circle cx="760" cy="452" r="4.8" fill="#fff" stroke="#9a9a9a" stroke-width="1.5"/><circle cx="475" cy="586.5" r="4.8" fill="#fff" stroke="#9a9a9a" stroke-width="1.5"/><circle cx="617.3" cy="586.5" r="4.8" fill="#fff" stroke="#9a9a9a" stroke-width="1.5"/><circle cx="760" cy="586.5" r="4.8" fill="#fff" stroke="#9a9a9a" stroke-width="1.5"/><path d="M622.9 282.2A6.8 6.8 0 1 0 620.9 289.7" fill="none" stroke="#9a9a9a" stroke-width="3.8"/><path d="M622.9 282.2A6.8 6.8 0 1 0 620.9 289.7" fill="none" stroke="#fff" stroke-width="1.3"/><path d="M619.8 282.8h12.5l-6.3 6.5z" fill="#fff" stroke="#9a9a9a" stroke-width="1.3" stroke-linejoin="round"/><rect x="773" y="318.5" width="27.5" height="27.5" fill="#fff" stroke="#b4b4b4" stroke-width="1"/><g stroke="#2f8ad8" stroke-width="1.2"><path d="M775.5 323.5H797M775.5 339.5H797M775.5 327.5h3M775.5 331.5h3M775.5 335.5h3M794.3 327.5h3M794.3 331.5h3M794.3 335.5h3"/></g><path d="M779.4 336.2a7.1 7.1 0 0 1 14.2 0h-4.1a3 3 0 0 0 -6 0z" fill="#333"/></svg>
<svg style="left:1590px;top:895px;z-index:10" width="60" height="57" viewBox="1590 895 60 57"><circle cx="1619" cy="923.5" r="24.5" fill="#fff" fill-opacity="0.6" stroke="#e3e8ef" stroke-width="0.8"/></svg>
<svg style="left:1590px;top:895px;z-index:14" width="60" height="57" viewBox="1590 895 60 57">
<path d="M1619.3 933.7C1616 930 1613.5 929 1611 927.8C1606.5 925.5 1603 920 1602.8 913.5C1602.8 907.5 1609 902.3 1619.3 902.3C1626 902.3 1631.2 906.5 1631.3 913.3C1631.2 918 1628.3 921.5 1628 925.5C1627.8 928.5 1628.3 931 1627.6 932.2C1626 934 1623.5 935 1622 936.5" fill="none" stroke="#7199d0" stroke-width="1.6"/>
<path d="M1622 937.5C1625 936.5 1630 935.5 1633 937C1633.5 939.5 1628 942.5 1622.5 945" fill="none" stroke="#7199d0" stroke-width="1.6"/>
</svg>
<div style='position:absolute;left:0px;top:35px;width:1px;height:917px;background:#2b579a;z-index:5'></div>
<div style='position:absolute;left:1649px;top:35px;width:1px;height:917px;background:#2b579a;z-index:5'></div>
<div style='position:absolute;left:0px;top:951px;width:1650px;height:1px;background:#2b579a;z-index:5'></div>
<svg style="left:0;top:0;z-index:20;pointer-events:none" width="1650" height="952" viewBox="0 0 1650 952">
<path d="M0 0H7A7 7 0 0 0 0 7Z" fill="#a9bcd6"/>
<path d="M1650 0V7A7 7 0 0 0 1643 0Z" fill="#a9bcd6"/>
<path d="M0 952V945A7 7 0 0 0 7 952Z" fill="#8fa5c4"/>
<path d="M1650 952H1643A7 7 0 0 0 1650 945Z" fill="#8fa5c4"/>
<path d="M0.5 944.5A7 7 0 0 0 7.5 951.5M1649.5 944.5A7 7 0 0 1 1642.5 951.5" fill="none" stroke="#2b579a" stroke-width="1.2"/>
</svg>
<div style='position:absolute;left:340px;top:205px;width:976px;height:1px;background:#d6d6d6'></div>
<div style='position:absolute;left:340px;top:205px;width:1px;height:724px;background:#d6d6d6'></div>
<div style='position:absolute;left:1315px;top:205px;width:1px;height:724px;background:#d6d6d6'></div>
<div class='t' style='left:22.00px;top:11.20px;font-size:13px;color:#fff;font-weight:400;font-style:normal;font-family:"Liberation Sans",sans-serif;transform:scaleX(0.9506);'>Autoguardado</div>
<div class='t' style='left:417.07px;top:11.20px;font-size:13px;color:#fff;font-weight:400;font-style:normal;font-family:"Liberation Sans",sans-serif;transform:scaleX(0.9344);'>Documento1&nbsp; -&nbsp; Word</div>
<div class='t' style='left:698.40px;top:11.80px;font-size:12.5px;color:#1a3866;font-weight:400;font-style:normal;font-family:"Liberation Sans",sans-serif;transform:scaleX(0.9000);'>Buscar</div>
<div class='t' style='left:1399.04px;top:11.70px;font-size:12px;color:#2b579a;font-weight:400;font-style:normal;font-family:"Liberation Sans",sans-serif;transform:scaleX(0.9556);'>Inic. ses.</div>
<div class='t' style='left:15.00px;top:44.00px;font-size:13px;color:#444;font-weight:400;font-style:normal;font-family:"Liberation Sans",sans-serif;transform:scaleX(0.9767);'>Archivo</div>
<div class='t' style='left:85.90px;top:44.00px;font-size:13px;color:#444;font-weight:400;font-style:normal;font-family:"Liberation Sans",sans-serif;transform:scaleX(1.1034);'>Inicio</div>
<div class='t' style='left:145.98px;top:44.00px;font-size:13px;color:#444;font-weight:400;font-style:normal;font-family:"Liberation Sans",sans-serif;transform:scaleX(1.0233);'>Insertar</div>
<div class='t' style='left:219.00px;top:44.00px;font-size:13px;color:#444;font-weight:400;font-style:normal;font-family:"Liberation Sans",sans-serif;'>Diseño</div>
<div class='t' style='left:286.97px;top:44.00px;font-size:13px;color:#444;font-weight:400;font-style:normal;font-family:"Liberation Sans",sans-serif;transform:scaleX(1.0308);'>Disposición</div>
<div class='t' style='left:382.03px;top:44.00px;font-size:13px;color:#444;font-weight:400;font-style:normal;font-family:"Liberation Sans",sans-serif;transform:scaleX(0.9706);'>Referencias</div>
<div class='t' style='left:477.99px;top:44.00px;font-size:13px;color:#444;font-weight:400;font-style:normal;font-family:"Liberation Sans",sans-serif;transform:scaleX(1.0102);'>Correspondencia</div>
<div class='t' style='left:606.05px;top:44.00px;font-size:13px;color:#444;font-weight:400;font-style:normal;font-family:"Liberation Sans",sans-serif;transform:scaleX(0.9535);'>Revisar</div>
<div class='t' style='left:677.00px;top:44.00px;font-size:13px;color:#444;font-weight:400;font-style:normal;font-family:"Liberation Sans",sans-serif;transform:scaleX(0.9310);'>Vista</div>
<div class='t' style='left:731.95px;top:44.00px;font-size:13px;color:#444;font-weight:400;font-style:normal;font-family:"Liberation Sans",sans-serif;transform:scaleX(1.0533);'>Programador</div>
<div class='t' style='left:841.00px;top:44.00px;font-size:13px;color:#444;font-weight:400;font-style:normal;font-family:"Liberation Sans",sans-serif;transform:scaleX(0.9730);'>Ayuda</div>
<div class='t' style='left:906.96px;top:44.00px;font-size:13px;color:#2b579a;font-weight:400;font-style:normal;font-family:"Liberation Sans",sans-serif;transform:scaleX(1.0360);'>Formato de imagen</div>
<div class='t' style='left:1566.00px;top:44.40px;font-size:13px;color:#2b579a;font-weight:700;font-style:normal;font-family:"Liberation Sans",sans-serif;transform:scaleX(0.9839);'>Compartir</div>
<div class='t' style='left:14.75px;top:107.70px;font-size:12px;color:#404040;font-weight:400;font-style:normal;font-family:"Liberation Sans",sans-serif;transform:scaleX(0.9452);'>Pegar</div>
<div class='t' style='left:72.59px;top:75.00px;font-size:12px;color:#404040;font-weight:400;font-style:normal;font-family:"Liberation Sans",sans-serif;transform:scaleX(1.0125);'>Cortar</div>
<div class='t' style='left:72.60px;top:98.80px;font-size:12px;color:#404040;font-weight:400;font-style:normal;font-family:"Liberation Sans",sans-serif;'>Copiar</div>
<div class='t' style='left:72.57px;top:122.90px;font-size:12px;color:#404040;font-weight:400;font-style:normal;font-family:"Liberation Sans",sans-serif;transform:scaleX(1.0269);'>Copiar formato</div>
<div class='t' style='left:42.85px;top:146.70px;font-size:12px;color:#404040;font-weight:400;font-style:normal;font-family:"Liberation Sans",sans-serif;transform:scaleX(0.9493);'>Portapapeles</div>
<div class='t' style='left:289.51px;top:146.80px;font-size:12px;color:#404040;font-weight:400;font-style:normal;font-family:"Liberation Sans",sans-serif;transform:scaleX(0.9861);'>Fuente</div>
<div class='t' style='left:588.05px;top:146.50px;font-size:12px;color:#404040;font-weight:400;font-style:normal;font-family:"Liberation Sans",sans-serif;transform:scaleX(0.9474);'>Párrafo</div>
<div class='t' style='left:1084.06px;top:146.50px;font-size:12px;color:#404040;font-weight:400;font-style:normal;font-family:"Liberation Sans",sans-serif;transform:scaleX(0.9412);'>Estilos</div>
<div class='t' style='left:1489.63px;top:146.60px;font-size:12px;color:#404040;font-weight:400;font-style:normal;font-family:"Liberation Sans",sans-serif;transform:scaleX(0.9737);'>Edición</div>
<div class='t' style='left:1481.64px;top:74.00px;font-size:12px;color:#404040;font-weight:400;font-style:normal;font-family:"Liberation Sans",sans-serif;transform:scaleX(0.9556);'>Buscar</div>
<div class='t' style='left:1481.66px;top:96.70px;font-size:12px;color:#404040;font-weight:400;font-style:normal;font-family:"Liberation Sans",sans-serif;transform:scaleX(0.9406);'>Reemplazar</div>
<div class='t' style='left:1481.44px;top:120.00px;font-size:12px;color:#404040;font-weight:400;font-style:normal;font-family:"Liberation Sans",sans-serif;transform:scaleX(0.9581);'>Seleccionar</div>
<div class='t' style='left:7.37px;top:934.70px;font-size:12px;color:#404040;font-weight:400;font-style:normal;font-family:"Liberation Sans",sans-serif;transform:scaleX(0.9329);'>Página 1 de 1</div>
<div class='t' style='left:97.00px;top:934.70px;font-size:12px;color:#404040;font-weight:400;font-style:normal;font-family:"Liberation Sans",sans-serif;transform:scaleX(0.9375);'>0 palabras</div>
<div class='t' style='left:200.05px;top:934.70px;font-size:12px;color:#404040;font-weight:400;font-style:normal;font-family:"Liberation Sans",sans-serif;transform:scaleX(0.9462);'>Español (Colombia)</div>
<div class='t' style='left:1250.02px;top:934.70px;font-size:12px;color:#404040;font-weight:400;font-style:normal;font-family:"Liberation Sans",sans-serif;transform:scaleX(0.9803);'>Concentración</div>
<div class='t' style='left:1602.12px;top:934.40px;font-size:12px;color:#6a6a6a;font-weight:400;font-style:normal;font-family:"Liberation Sans",sans-serif;transform:scaleX(0.8759);z-index:12;'>120%</div>
<div class='t' style='left:180.50px;top:82.80px;font-size:12.5px;color:#222;font-weight:400;font-style:normal;font-family:"Liberation Sans",sans-serif;transform:scaleX(0.9667);'>Arial</div>
<div class='t' style='left:292.11px;top:82.80px;font-size:12.5px;color:#222;font-weight:400;font-style:normal;font-family:"Liberation Sans",sans-serif;transform:scaleX(0.8923);'>12</div>
<div class='t' style='left:181.54px;top:113.00px;font-size:13.5px;color:#333;font-weight:700;font-style:normal;font-family:"Liberation Sans",sans-serif;transform:scaleX(1.1625);'>N</div>
<div class='t' style='left:207.50px;top:113.00px;font-size:13.5px;color:#444;font-weight:400;font-style:italic;font-family:"Liberation Sans",sans-serif;transform:scaleX(0.9667);'>K</div>
<div class='t' style='left:230.66px;top:113.00px;font-size:13.5px;color:#444;font-weight:400;font-style:normal;font-family:"Liberation Sans",sans-serif;transform:scaleX(1.0375);'>S</div>
<div class='t' style='left:268.50px;top:114.00px;font-size:12.5px;color:#444;font-weight:400;font-style:normal;font-family:"Liberation Sans",sans-serif;transform:scaleX(0.9286);'>ab</div>
<div class='t' style='left:295.00px;top:113.00px;font-size:13px;color:#333;font-weight:700;font-style:normal;font-family:"Liberation Sans",sans-serif;transform:scaleX(0.9571);'>x</div>
<div class='t' style='left:319.20px;top:113.00px;font-size:13px;color:#333;font-weight:700;font-style:normal;font-family:"Liberation Sans",sans-serif;transform:scaleX(0.9714);'>x</div>
<div class='t' style='left:302.80px;top:121.70px;font-size:7px;color:#2f8ad8;font-weight:700;font-style:normal;font-family:"Liberation Sans",sans-serif;transform:scaleX(0.9000);'>2</div>
<div class='t' style='left:327.00px;top:110.50px;font-size:7px;color:#2f8ad8;font-weight:700;font-style:normal;font-family:"Liberation Sans",sans-serif;transform:scaleX(0.7500);'>2</div>
<div class='t' style='left:393.00px;top:81.90px;font-size:13.5px;color:#444;font-weight:400;font-style:normal;font-family:"Liberation Sans",sans-serif;transform:scaleX(0.9647);'>Aa</div>
<div class='t' style='left:514.40px;top:78.50px;font-size:6.5px;color:#2f8ad8;font-weight:700;font-style:normal;font-family:"Liberation Sans",sans-serif;transform:scaleX(0.7750);'>1</div>
<div class='t' style='left:514.40px;top:84.60px;font-size:6.5px;color:#2f8ad8;font-weight:700;font-style:normal;font-family:"Liberation Sans",sans-serif;transform:scaleX(1.2000);'>2</div>
<div class='t' style='left:514.40px;top:90.60px;font-size:6.5px;color:#2f8ad8;font-weight:700;font-style:normal;font-family:"Liberation Sans",sans-serif;transform:scaleX(0.9000);'>3</div>
<div class='t' style='left:553.60px;top:78.50px;font-size:6.5px;color:#2f8ad8;font-weight:700;font-style:normal;font-family:"Liberation Sans",sans-serif;transform:scaleX(0.6500);'>1</div>
<div class='t' style='left:556.00px;top:84.60px;font-size:6.5px;color:#2f8ad8;font-weight:700;font-style:normal;font-family:"Liberation Sans",sans-serif;'>a</div>
<div class='t' style='left:561.50px;top:90.60px;font-size:6.5px;color:#2f8ad8;font-weight:700;font-style:normal;font-family:"Liberation Sans",sans-serif;transform:scaleX(0.7500);'>i</div>
<div class='t' style='left:661.00px;top:82.60px;font-size:11px;color:#333;font-weight:700;font-style:normal;font-family:"Liberation Sans",sans-serif;transform:scaleX(1.0833);'>¶</div>
<div class='t' style='left:679.70px;top:82.60px;font-size:11px;color:#333;font-weight:700;font-style:normal;font-family:"Liberation Sans",sans-serif;transform:scaleX(1.0500);'>¶</div>
<div class='t' style='left:708.40px;top:79.70px;font-size:8.5px;color:#2f8ad8;font-weight:700;font-style:normal;font-family:"Liberation Sans",sans-serif;transform:scaleX(1.1833);'>A</div>
<div class='t' style='left:708.40px;top:88.50px;font-size:8.5px;color:#333;font-weight:700;font-style:normal;font-family:"Liberation Sans",sans-serif;transform:scaleX(1.3200);'>Z</div>
<div class='t' style='left:742.70px;top:81.30px;font-size:14px;color:#333;font-weight:700;font-style:normal;font-family:"Liberation Sans",sans-serif;transform:scaleX(1.2250);'>¶</div>
<div style='position:absolute;left:782px;top:74px;width:60.700000000000045px;height:30px;overflow:hidden'><div class='t' style='left:2.00px;top:10.30px;font-size:15.4px;color:#000;font-weight:700;font-style:normal;font-family:"Liberation Sans",sans-serif;transform:scaleX(1.0339);'>AaBbCc</div></div>
<div style='position:absolute;left:854px;top:74px;width:60.5px;height:30px;overflow:hidden'><div class='t' style='left:2.00px;top:10.30px;font-size:15.4px;color:#000;font-weight:700;font-style:normal;font-family:"Liberation Sans",sans-serif;transform:scaleX(1.0339);'>AaBbCc</div></div>
<div style='position:absolute;left:926.7px;top:74px;width:63.299999999999955px;height:30px;overflow:hidden'><div class='t' style='left:2.00px;top:11.30px;font-size:17.8px;color:#2f5496;font-weight:400;font-style:normal;font-family:"Liberation Sans",sans-serif;transform:scaleX(1.0545);'>AaBbC</div></div>
<div style='position:absolute;left:998px;top:74px;width:64px;height:30px;overflow:hidden'><div class='t' style='left:2.00px;top:11.00px;font-size:15px;color:#2f5496;font-weight:400;font-style:normal;font-family:"Liberation Sans",sans-serif;transform:scaleX(1.0741);'>AaBbCc</div></div>
<div style='position:absolute;left:1070px;top:80.6px;width:61px;height:23.400000000000006px;overflow:hidden'><div class='t' style='left:2.00px;top:-6.30px;font-size:30px;color:#000;font-weight:400;font-style:normal;font-family:"Liberation Sans",sans-serif;'>AaB</div></div>
<div style='position:absolute;left:1142px;top:74px;width:60.5px;height:30px;overflow:hidden'><div class='t' style='left:2.00px;top:14.30px;font-size:11.8px;color:#595959;font-weight:700;font-style:normal;font-family:"Liberation Sans",sans-serif;transform:scaleX(1.1111);'>AaBbCcD</div></div>
<div style='position:absolute;left:1214px;top:74px;width:60.5px;height:30px;overflow:hidden'><div class='t' style='left:2.00px;top:10.60px;font-size:16.3px;color:#404040;font-weight:700;font-style:italic;font-family:"Liberation Sans",sans-serif;transform:scaleX(0.9683);'>AaBbCc</div></div>
<div style='position:absolute;left:1286px;top:74px;width:60.299999999999955px;height:30px;overflow:hidden'><div class='t' style='left:2.00px;top:10.90px;font-size:16.3px;color:#000;font-weight:700;font-style:italic;font-family:"Liberation Sans",sans-serif;transform:scaleX(0.9683);'>AaBbCc</div></div>
<div style='position:absolute;left:1358px;top:74px;width:60.299999999999955px;height:30px;overflow:hidden'><div class='t' style='left:2.00px;top:10.90px;font-size:16.3px;color:#4472c4;font-weight:700;font-style:italic;font-family:"Liberation Sans",sans-serif;transform:scaleX(0.9683);'>AaBbCc</div></div>
<div class='t' style='left:788.60px;top:111.60px;font-size:12px;color:#595959;font-weight:400;font-style:normal;font-family:"Liberation Sans",sans-serif;transform:scaleX(1.0146);'>¶ Normal</div>
<div class='t' style='left:854.50px;top:111.60px;font-size:12px;color:#595959;font-weight:400;font-style:normal;font-family:"Liberation Sans",sans-serif;transform:scaleX(0.9091);'>¶ Sin espa...</div>
<div class='t' style='left:938.70px;top:111.60px;font-size:12px;color:#595959;font-weight:400;font-style:normal;font-family:"Liberation Sans",sans-serif;transform:scaleX(0.9150);'>Título 1</div>
<div class='t' style='left:1010.70px;top:111.60px;font-size:12px;color:#595959;font-weight:400;font-style:normal;font-family:"Liberation Sans",sans-serif;transform:scaleX(0.9325);'>Título 2</div>
<div class='t' style='left:1087.00px;top:111.60px;font-size:12px;color:#595959;font-weight:400;font-style:normal;font-family:"Liberation Sans",sans-serif;transform:scaleX(0.9667);'>Título</div>
<div class='t' style='left:1147.95px;top:111.60px;font-size:12px;color:#595959;font-weight:400;font-style:normal;font-family:"Liberation Sans",sans-serif;transform:scaleX(1.0500);'>Subtítulo</div>
<div class='t' style='left:1214.03px;top:111.60px;font-size:12px;color:#595959;font-weight:400;font-style:normal;font-family:"Liberation Sans",sans-serif;transform:scaleX(0.9677);'>Énfasis sutil</div>
<div class='t' style='left:1298.67px;top:111.60px;font-size:12px;color:#595959;font-weight:400;font-style:normal;font-family:"Liberation Sans",sans-serif;transform:scaleX(0.9316);'>Énfasis</div>
<div class='t' style='left:1357.84px;top:111.60px;font-size:12px;color:#595959;font-weight:400;font-style:normal;font-family:"Liberation Sans",sans-serif;transform:scaleX(0.9556);'>Énfasis int...</div>
<div class='t' style='left:1468.25px;top:94.50px;font-size:9.5px;color:#a347ba;font-weight:400;font-style:normal;font-family:"Liberation Sans",sans-serif;transform:scaleX(1.2500);'>b</div>
<div class='t' style='left:1472.00px;top:102.00px;font-size:9.5px;color:#2f8ad8;font-weight:400;font-style:normal;font-family:"Liberation Sans",sans-serif;transform:scaleX(1.2500);'>c</div>
</body></html>
